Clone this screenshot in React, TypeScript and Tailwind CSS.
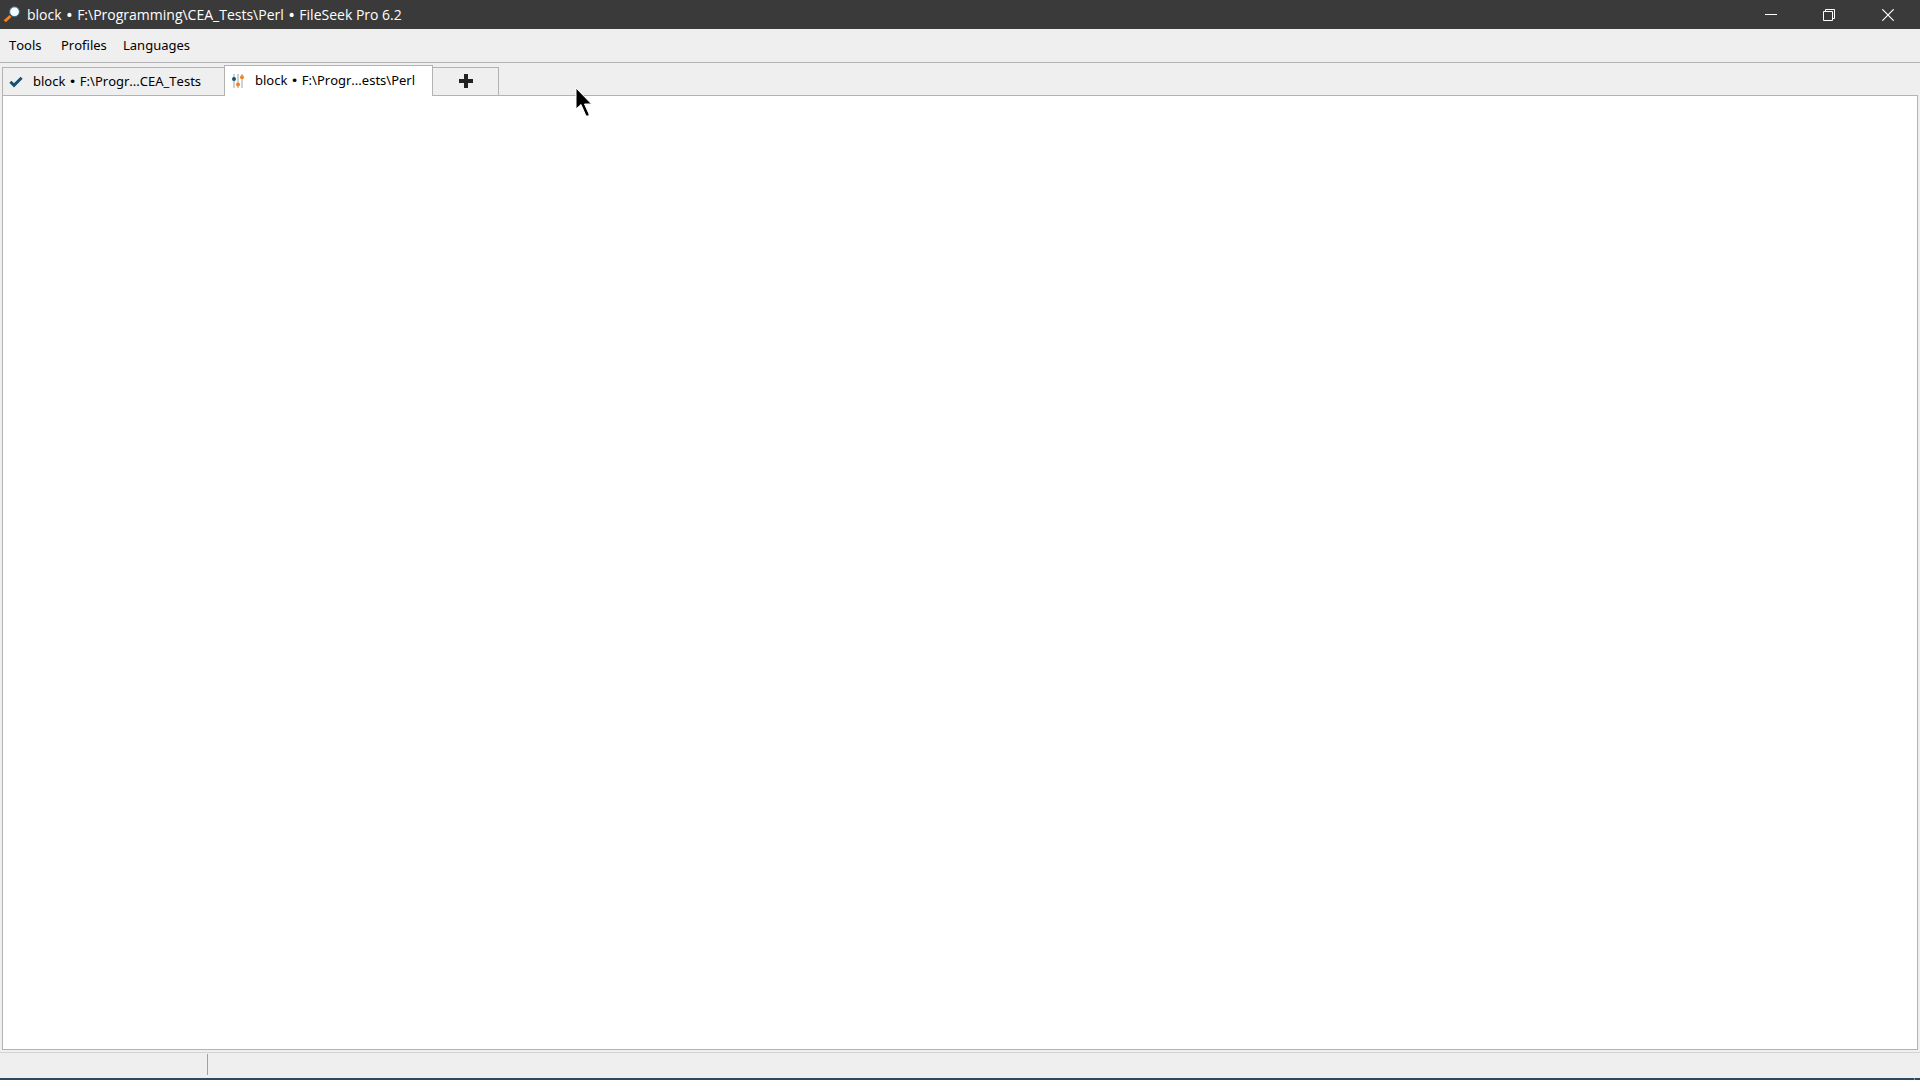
import { useState } from "react";

const menus = [
  { name: "Tools", className: "w-[52px]" },
  { name: "Profiles", className: "w-[62px]" },
  { name: "Languages", className: "w-[82px]" },
];

function Bullet() {
  return <span className="font-['DejaVu_Sans',sans-serif]">•</span>;
}

function SearchIcon() {
  return (
    <svg width="17" height="17" viewBox="0 0 17 17" aria-hidden="true">
      <path d="M0.8 15.2 L6.5 10" stroke="#f58220" strokeWidth="3" />
      <circle cx="10.5" cy="5.7" r="4.9" fill="#f4fafd" stroke="#2a6a8a" strokeWidth="1" />
    </svg>
  );
}

function CheckIcon() {
  return (
    <svg width="14" height="14" viewBox="0 0 14 14" aria-hidden="true">
      <path d="M1.4 6.7 L5 10.3 L12.6 2.7" fill="none" stroke="#15536f" strokeWidth="3" />
    </svg>
  );
}

function SlidersIcon() {
  return (
    <svg width="14" height="16" viewBox="0 0 14 16" aria-hidden="true">
      <path d="M3 1 V15 M7 1 V15 M11 1 V15" stroke="#d0d0d0" strokeWidth="2" />
      <circle cx="3" cy="6" r="2" fill="#15536f" />
      <circle cx="7" cy="11.5" r="2" fill="#f58220" />
      <circle cx="11" cy="4.3" r="2" fill="#f58220" />
    </svg>
  );
}

function TitleBar() {
  return (
    <header className="flex h-[29px] shrink-0 bg-[#3a3a3a] pl-1 pr-[2px] text-white">
      <div className="flex flex-1 items-center gap-[6px]">
        <SearchIcon />
        <h1 className="whitespace-pre font-['Open_Sans',sans-serif] text-[14px] leading-5">
          block <Bullet /> {"F:\\Programming\\CEA_Tests\\Perl"} <Bullet /> FileSeek Pro 6.2
        </h1>
      </div>
      <button aria-label="Minimize" className="flex w-[58px] items-center justify-center">
        <svg width="12" height="12" viewBox="0 0 12 12" stroke="currentColor">
          <path d="M0 5.5 H12" />
        </svg>
      </button>
      <button aria-label="Restore" className="flex w-[58px] items-center justify-center">
        <svg width="12" height="12" viewBox="0 0 12 12" fill="none" stroke="currentColor">
          <path d="M0.5 2.5 H9.5 V11.5 H0.5 Z M2.5 2.5 V0.5 H11.5 V9.5 H9.5" />
        </svg>
      </button>
      <button aria-label="Close" className="flex w-[60px] items-center justify-center">
        <svg width="12" height="12" viewBox="0 0 12 12" stroke="currentColor" strokeWidth="1.2">
          <path d="M0.3 0.3 L11.7 11.7 M11.7 0.3 L0.3 11.7" />
        </svg>
      </button>
    </header>
  );
}

function App() {
  const [active, setActive] = useState(1);

  const tabClass = (index: number) =>
    index === active
      ? "h-[31px] bg-white border-x border-t -mb-px"
      : "h-7 bg-[#efefef] border-t";

  return (
    <div className="relative flex h-screen flex-col overflow-hidden bg-[#efefef] font-['Noto_Sans',sans-serif] text-[13px] leading-4 text-black [font-kerning:none]">
      <TitleBar />

      {/* Menu bar */}
      <nav className="flex h-[34px] shrink-0 items-center border-b border-[#b3b3b3] pb-[2px] pl-[9px]">
        {menus.map((menu) => (
          <button key={menu.name} className={`${menu.className} text-left`}>
            {menu.name}
          </button>
        ))}
      </nav>

      {/* Tabs */}
      <div className="mx-[2px] flex h-8 shrink-0 items-end" role="tablist">
        <button
          role="tab"
          aria-selected={active === 0}
          onClick={() => setActive(0)}
          className={`${tabClass(0)} flex w-[222px] items-center gap-[10px] border-l border-[#b3b3b3] pl-[6px]`}
        >
          <CheckIcon />
          <span>
            block <Bullet /> {"F:\\Progr...CEA_Tests"}
          </span>
        </button>
        <button
          role="tab"
          aria-selected={active === 1}
          onClick={() => setActive(1)}
          className={`${tabClass(1)} z-10 flex w-[209px] items-center gap-[10px] border-[#b3b3b3] pb-px pl-[6px]`}
        >
          <SlidersIcon />
          <span>
            block <Bullet /> {"F:\\Progr...ests\\Perl"}
          </span>
        </button>
        <button
          aria-label="New tab"
          className="flex h-7 w-[66px] items-center justify-center border-r border-t border-[#b3b3b3] pb-px"
        >
          <svg width="14" height="14" viewBox="0 0 14 14" aria-hidden="true">
            <path d="M5 0 H9 V5 H14 V9 H9 V14 H5 V9 H0 V5 H5 Z" fill="#222" />
          </svg>
        </button>
      </div>

      <main className="mx-[2px] flex-1 border border-[#b3b3b3] bg-white" />

      {/* Status bar */}
      <footer className="mt-[2px] flex h-[26px] shrink-0 border-t border-[#d4d4d4] pb-[3px] pt-px">
        <div className="w-[208px] border-r border-[#a0a0a0]" />
      </footer>
      <div className="flex h-[2px] shrink-0 justify-end bg-[#2f4a5e] pr-[5px]">
        <div className="w-px bg-[#8a979f]" />
      </div>

      {/* Mouse pointer */}
      <svg
        className="pointer-events-none absolute left-[575px] top-[87px] z-20"
        width="18"
        height="31"
        viewBox="0 0 18 31"
        aria-hidden="true"
      >
        <path
          d="M1 1 V22 L6 17.5 L11 29 H14 V27 L9.5 17 H16.5 Z"
          fill="#000"
          stroke="#fff"
          strokeWidth="1"
        />
      </svg>
    </div>
  );
}

export default App;
